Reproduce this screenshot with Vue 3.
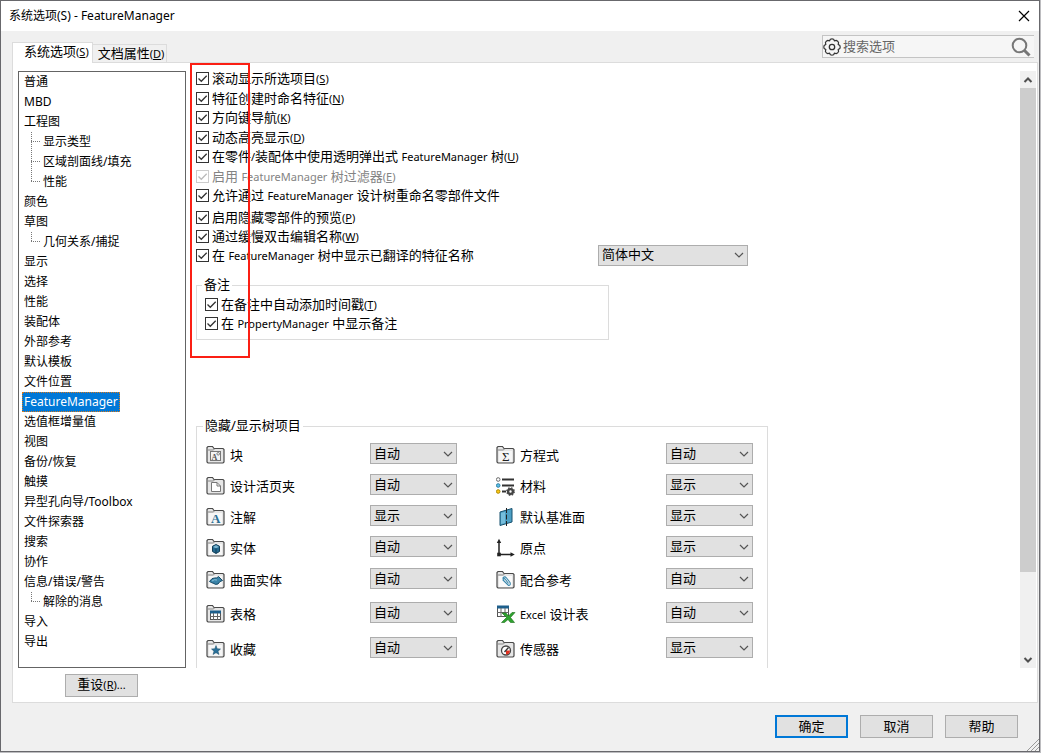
<template>
  <div class="window">
    <header class="titlebar">
      <h1>系统选项(S) - FeatureManager</h1>
      <button class="close" aria-label="关闭">
        <svg width="12" height="12" viewBox="0 0 12 12">
          <path d="M1 1L11 11M11 1L1 11" stroke="#000" stroke-width="1.2" />
        </svg>
      </button>
    </header>

    <div class="tabbar">
      <div class="tabs" role="tablist">
        <button
          v-for="tab in tabs"
          :key="tab"
          role="tab"
          :class="['tab', { active: tab === activeTab }]"
          :aria-selected="tab === activeTab"
          @click="activeTab = tab"
        >
          <span v-for="(p, i) in split(tab)" :key="i" :class="p.type">{{ p.text }}</span>
        </button>
      </div>
      <div class="search">
        <svg width="18" height="18" viewBox="0 0 18 18" fill="none" stroke="#333">
          <path
            stroke-width="1.2"
            d="M7.4 1.2Q9 .4 10.6 1.2L11.4 2.8L13.2 2.3Q15 2.8 15.6 4.6L15.2 6.4L16.8 7.4Q17.5 9 16.8 10.6L15.2 11.6L15.6 13.4Q15 15.2 13.2 15.7L11.4 15.2L10.6 16.8Q9 17.6 7.4 16.8L6.6 15.2L4.8 15.7Q3 15.2 2.4 13.4L2.8 11.6L1.2 10.6Q.5 9 1.2 7.4L2.8 6.4L2.4 4.6Q3 2.8 4.8 2.3L6.6 2.8Z"
          />
          <circle cx="9" cy="9" r="2.7" stroke-width="1.3" />
        </svg>
        <input v-model="keyword" type="text" placeholder="搜索选项" aria-label="搜索选项" />
        <button class="search-btn" aria-label="搜索">
          <svg width="20" height="20" viewBox="0 0 20 20" fill="none" stroke="#777">
            <circle cx="8.5" cy="8.5" r="6.8" stroke-width="2" />
            <path d="M13.5 13.5L18.5 18.5" stroke-width="3" />
          </svg>
        </button>
      </div>
    </div>

    <section class="panel">
      <div class="main">
        <ul class="tree">
          <li v-for="item in treeItems" :key="item.id">
            <svg v-if="item.child" class="branch" width="12" height="20" viewBox="0 0 12 20">
              <path
                :d="item.last ? 'M.5 0V10' : 'M.5 0V20'"
                stroke="#777"
                stroke-dasharray="1 1"
              />
              <path d="M0 9.5H10" stroke="#777" stroke-dasharray="1 1" />
            </svg>
            <button
              :class="['node', { selected: item.id === selected }]"
              @click="selected = item.id"
            >
              {{ item.name }}
            </button>
          </li>
        </ul>

        <div class="content">
          <div class="options">
            <label v-for="opt in options" :key="opt.label" :class="['check', { disabled: opt.disabled }]">
              <input v-model="opt.checked" type="checkbox" :disabled="opt.disabled" />
              <span class="text">
                <span v-for="(p, i) in split(opt.label)" :key="i" :class="p.type">{{ p.text }}</span>
              </span>
            </label>
          </div>

          <div class="options-more">
            <div v-for="opt in moreOptions" :key="opt.label" class="option-row">
              <label class="check">
                <input v-model="opt.checked" type="checkbox" />
                <span class="text">
                  <span v-for="(p, i) in split(opt.label)" :key="i" :class="p.type">{{ p.text }}</span>
                </span>
              </label>
              <select v-if="opt.language" v-model="language" aria-label="特征名称语言">
                <option>简体中文</option>
                <option>English</option>
              </select>
            </div>
          </div>

          <fieldset class="notes">
            <legend>备注</legend>
            <label v-for="opt in noteOptions" :key="opt.label" class="check">
              <input v-model="opt.checked" type="checkbox" />
              <span class="text">
                <span v-for="(p, i) in split(opt.label)" :key="i" :class="p.type">{{ p.text }}</span>
              </span>
            </label>
          </fieldset>

          <fieldset class="visibility">
            <legend>隐藏/显示树项目</legend>
            <div class="visibility-grid">
              <template v-for="entry in entries" :key="entry.id">
                <label class="entry" :for="entry.id">
                  <svg width="20" height="20" viewBox="0 0 20 20">
                    <g v-if="entry.folder">
                      <path
                        d="M1 17V2.5L2 1.5H6.5L8 3.5H17L18 4.5V17L17 18H2Z"
                        fill="#e6e6e6"
                        stroke="#4a4a4a"
                        stroke-width="1.2"
                      />
                      <path d="M1.5 5H7.5L8.5 3.8" fill="none" stroke="#888" />
                    </g>
                    <g v-html="glyphs[entry.icon]"></g>
                  </svg>
                  <span class="text">
                    <span v-for="(p, i) in split(entry.name)" :key="i" :class="p.type">{{ p.text }}</span>
                  </span>
                </label>
                <select :id="entry.id" v-model="entry.value">
                  <option>自动</option>
                  <option>隐藏</option>
                  <option>显示</option>
                </select>
              </template>
            </div>
          </fieldset>
        </div>

        <div class="scrollbar">
          <button aria-label="向上滚动">
            <svg width="10" height="8" viewBox="0 0 10 8" fill="none">
              <path d="M1.5 6L5 2.5L8.5 6" stroke="#505050" stroke-width="2" />
            </svg>
          </button>
          <div class="track"><div class="thumb"></div></div>
          <button aria-label="向下滚动">
            <svg width="10" height="8" viewBox="0 0 10 8" fill="none">
              <path d="M1.5 2L5 5.5L8.5 2" stroke="#505050" stroke-width="2" />
            </svg>
          </button>
        </div>

        <div class="highlight"></div>
      </div>

      <div class="reset-row">
        <button class="btn">
          <span v-for="(p, i) in split('重设(R)...')" :key="i" :class="p.type">{{ p.text }}</span>
        </button>
      </div>
    </section>

    <footer class="footer">
      <button class="btn primary">确定</button>
      <button class="btn">取消</button>
      <button class="btn">帮助</button>
    </footer>

    <svg class="grip" width="12" height="12" viewBox="0 0 12 12">
      <path d="M0 12L12 0M4 12L12 4M8 12L12 8" stroke="#999" />
    </svg>
  </div>
</template>

<script setup>
import { ref } from 'vue'

const tabs = ['系统选项(S)', '文档属性(D)']
const activeTab = ref(tabs[0])
const keyword = ref('')
const language = ref('简体中文')

const tree = [
  { name: '普通' },
  { name: 'MBD' },
  { name: '工程图', children: ['显示类型', '区域剖面线/填充', '性能'] },
  { name: '颜色' },
  { name: '草图', children: ['几何关系/捕捉'] },
  { name: '显示' },
  { name: '选择' },
  { name: '性能' },
  { name: '装配体' },
  { name: '外部参考' },
  { name: '默认模板' },
  { name: '文件位置' },
  { name: 'FeatureManager' },
  { name: '选值框增量值' },
  { name: '视图' },
  { name: '备份/恢复' },
  { name: '触摸' },
  { name: '异型孔向导/Toolbox' },
  { name: '文件探索器' },
  { name: '搜索' },
  { name: '协作' },
  { name: '信息/错误/警告', children: ['解除的消息'] },
  { name: '导入' },
  { name: '导出' },
]

const treeItems = tree.flatMap((item) => {
  const children = item.children || []
  return [
    { id: item.name, name: item.name },
    ...children.map((name, i) => ({
      id: item.name + '/' + name,
      name,
      child: true,
      last: i === children.length - 1,
    })),
  ]
})
const selected = ref('FeatureManager')

const options = ref([
  { label: '滚动显示所选项目(S)', checked: true },
  { label: '特征创建时命名特征(N)', checked: true },
  { label: '方向键导航(K)', checked: true },
  { label: '动态高亮显示(D)', checked: true },
  { label: '在零件/装配体中使用透明弹出式 FeatureManager 树(U)', checked: true },
  { label: '启用 FeatureManager 树过滤器(E)', checked: true, disabled: true },
  { label: '允许通过 FeatureManager 设计树重命名零部件文件', checked: true },
])

const moreOptions = ref([
  { label: '启用隐藏零部件的预览(P)', checked: true },
  { label: '通过缓慢双击编辑名称(W)', checked: true },
  { label: '在 FeatureManager 树中显示已翻译的特征名称', checked: true, language: true },
])

const noteOptions = ref([
  { label: '在备注中自动添加时间戳(T)', checked: true },
  { label: '在 PropertyManager 中显示备注', checked: true },
])

const entries = ref([
  { id: 'block', name: '块', icon: 'block', folder: true, value: '自动' },
  { id: 'equation', name: '方程式', icon: 'sigma', folder: true, value: '自动' },
  { id: 'binder', name: '设计活页夹', icon: 'page', folder: true, value: '自动' },
  { id: 'material', name: '材料', icon: 'material', value: '显示' },
  { id: 'annotation', name: '注解', icon: 'letter', folder: true, value: '显示' },
  { id: 'plane', name: '默认基准面', icon: 'plane', value: '显示' },
  { id: 'solid', name: '实体', icon: 'cube', folder: true, value: '自动' },
  { id: 'origin', name: '原点', icon: 'origin', value: '显示' },
  { id: 'surface', name: '曲面实体', icon: 'surface', folder: true, value: '自动' },
  { id: 'mate', name: '配合参考', icon: 'clip', folder: true, value: '自动' },
  { id: 'tables', name: '表格', icon: 'table', folder: true, value: '自动' },
  { id: 'excel', name: 'Excel 设计表', icon: 'excel', value: '自动' },
  { id: 'favorite', name: '收藏', icon: 'star', folder: true, value: '自动' },
  { id: 'sensor', name: '传感器', icon: 'gauge', folder: true, value: '显示' },
])

const glyphs = {
  block:
    '<rect x="4.5" y="6.5" width="10" height="9" fill="#f4f4f4" stroke="#777"/><text x="5.5" y="14.5" font-family="Liberation Serif" font-weight="bold" font-size="8" fill="#555">A</text><circle cx="12.2" cy="8.8" r="1.3" fill="none" stroke="#666" stroke-width=".8"/>',
  sigma:
    '<rect x="3" y="6" width="13" height="11" fill="#f6f6f6"/><text x="6" y="16" font-family="Liberation Serif" font-size="13" fill="#222">Σ</text>',
  page: '<path d="M5.5 6.5H11L14.5 10V15.5H5.5Z" fill="#fff" stroke="#777"/><path d="M11 6.5V10H14.5" fill="none" stroke="#777"/>',
  letter:
    '<rect x="3" y="6" width="13" height="11" fill="#f6f6f6"/><text x="5" y="16" font-family="Liberation Serif" font-weight="bold" font-size="13" fill="#2b6f95">A</text>',
  cube: '<rect x="3" y="6" width="13" height="11" fill="#f6f6f6"/><path d="M10 6.5L13.5 8.2V13.5L10 15.5L6.5 13.5V8.2Z" fill="#246a90" stroke="#123f58"/><path d="M7 9L10 10.2L13 9L10 7.2Z" fill="#7fb9d4"/><path d="M10 10.5V15" stroke="#123f58"/>',
  surface:
    '<rect x="3" y="6" width="13" height="11" fill="#f6f6f6"/><path d="M3.5 11.5Q6 7.5 8.5 8Q11 8.5 12.5 6.5L16.5 10.5Q13.5 11 12 14Q9 15 8 13.5Q6 13 3.5 11.5Z" fill="#3a83a8" stroke="#174a66"/><path d="M6 11Q8 9 11 10" fill="none" stroke="#8cc4dc"/>',
  table:
    '<rect x="4.5" y="7.5" width="10" height="8" fill="#fff" stroke="#555"/><rect x="4" y="6.5" width="11" height="3" fill="#1d5f8c"/><path d="M4 12.5H15M7.5 9V16M11.5 9V16" stroke="#666"/>',
  star: '<rect x="3" y="6" width="13" height="11" fill="#f6f6f6"/><path d="M10 6.5L11.2 9.7L14.5 10L12 12.2L13 15.5L10 13.7L7 15.5L8 12.2L5.5 10L8.8 9.7Z" fill="#2a7099" stroke="#174a66" stroke-width=".5"/>',
  material:
    '<path d="M6 3.5H18M6 9.5H18M6 15.5H10" stroke="#333" stroke-width="2"/><circle cx="2.2" cy="3.5" r="1.8" fill="#fff" stroke="#666"/><circle cx="2.2" cy="9.5" r="1.8" fill="#5ac0e8" stroke="#2b7ea3"/><circle cx="2.2" cy="15.5" r="1.8" fill="#ffc815" stroke="#a80"/><circle cx="14.5" cy="15.5" r="2.4" fill="none" stroke="#444" stroke-width="2.4"/><circle cx="14.5" cy="15.5" r="3.8" fill="none" stroke="#444" stroke-width="1.2" stroke-dasharray="1.5 1.5"/>',
  plane:
    '<path d="M4 5L16 1.5V15L4 18.5Z" fill="#4d9fc4" stroke="#16506e"/><path d="M5 6L9 5V16L5 17Z" fill="#76bddb"/><path d="M10.5 1V19" stroke="#222" stroke-dasharray="5 1.5"/>',
  origin:
    '<path d="M3 17V4M3 16.5H15" fill="none" stroke="#222" stroke-width="1.5"/><path d="M.8 5L3 .8L5.200 5ZM14.5 14.300L18.8 16.5L14.5 18.7Z" fill="#222"/><rect x="1.2" y="14.7" width="3.6" height="3.6" fill="#222"/>',
  clip: '<rect x="3" y="6" width="13" height="11" fill="#fafafa"/><path d="M6.500 8.5Q8.5 5.5 10.5 8L14 12.5Q15 15.500 12.5 15.5L7 10Q8 7.5 9.5 9.5L12.5 13.5" fill="none" stroke="#3a87ac" stroke-width="1.1"/>',
  excel:
    '<rect x="1.5" y="2.5" width="11" height="10" fill="#fff" stroke="#555"/><rect x="1" y="1.5" width="12" height="3" fill="#1d5f8c"/><path d="M1 8.5H13M5 4V13M9 4V13" stroke="#666"/><path d="M6 9H10L12.5 12L16 8.5H19L14.5 13.5L18.5 18.5H14.5L12 15.5L8.5 18.5H5.5L10.5 13.5Z" fill="#2fa32f" stroke="#176b17" stroke-width=".6"/>',
  gauge:
    '<circle cx="10" cy="11.5" r="4.500" fill="#fff" stroke="#444" stroke-width="1.3"/><path d="M10 11.5L14 11.5A4 4 0 0 1 10 15.5Z" fill="#e0301e"/><path d="M8.5 13L12.5 8.5" stroke="#333" stroke-width="1.3"/>',
}

// Breaks a caption into CJK runs, latin runs and the underlined access key
const split = (label) => {
  const parts = []
  for (const run of label.match(/[\x21-\x7e]+|[^\x21-\x7e]+/g)) {
    const key = run.match(/^\((\w)\)(.*)$/)
    if (key) {
      parts.push({ type: 'latin', text: '(' })
      parts.push({ type: 'latin key', text: key[1] })
      parts.push({ type: 'latin', text: ')' + key[2] })
    } else {
      parts.push({ type: /^[\x21-\x7e]/.test(run) ? 'latin' : 'cjk', text: run })
    }
  }
  return parts
}
</script>

<style>
body {
  background: #bdbdc0;
}
</style>

<style scoped>
.window {
  position: relative;
  display: flex;
  flex-direction: column;
  box-sizing: border-box;
  height: calc(100vh - 1px);
  margin-right: 1px;
  border: 1px solid #68686c;
  background: #f0f0f0;
  color: #000;
  font-family: "Noto Sans", "Noto Sans CJK SC", sans-serif;
  font-size: 13px;
  line-height: 14px;
}

button,
input,
select {
  margin: 0;
  font: inherit;
  color: inherit;
}

.latin {
  font-size: 11px;
}

.key {
  text-decoration: underline;
}

.titlebar {
  display: flex;
  align-items: center;
  justify-content: space-between;
  flex: none;
  height: 30px;
  padding: 0 9px 0 8px;
  background: #fff;
}

.titlebar h1 {
  margin: 0;
  font-size: 12px;
  font-weight: normal;
}

.close {
  display: flex;
  padding: 0;
  border: none;
  background: none;
}

.tabbar {
  display: flex;
  justify-content: space-between;
  flex: none;
  height: 31px;
  padding: 0 5px 0 11px;
}

.tabs {
  display: flex;
  align-items: flex-end;
}

.tab {
  height: 18px;
  padding: 0 2px 0 5px;
  border: 1px solid #dcdcdc;
  border-left: none;
  border-bottom: none;
  background: #f0f0f0;
  white-space: nowrap;
}

.tab.active {
  position: relative;
  z-index: 1;
  height: 21px;
  margin-bottom: -1px;
  padding: 0 3px 4px 11px;
  border-left: 1px solid #dcdcdc;
  background: #fff;
}

.search {
  display: flex;
  align-items: center;
  box-sizing: border-box;
  width: 212px;
  height: 23px;
  margin-top: 4px;
  padding: 0 3px 0 0;
  border: 1px solid #c4c4c4;
  border-right: none;
  background: #f6f6f6;
}

.search input {
  flex: 1;
  min-width: 0;
  padding: 0 2px 2px;
  border: none;
  outline: none;
  background: none;
}

.search input::placeholder {
  color: #666;
}

.search-btn {
  display: flex;
  padding: 0;
  border: none;
  background: none;
}

.panel {
  display: flex;
  flex-direction: column;
  flex: 1;
  min-height: 0;
  margin: 0 1px 0 11px;
  border: 1px solid #dcdcdc;
  background: #fff;
}

.main {
  position: relative;
  display: flex;
  flex: 1;
  min-height: 0;
  padding: 0 1px 0 5px;
}

.tree {
  box-sizing: border-box;
  width: 168px;
  margin: 8px 0 0;
  padding: 0 3px;
  border: 1px solid #646464;
  list-style: none;
  font-size: 12px;
}

.tree li {
  display: flex;
  height: 20px;
}

.branch {
  flex: none;
  margin: 0 -2px 0 9px;
}

.node {
  padding: 0 1px;
  border: 1px solid transparent;
  background: none;
  white-space: nowrap;
}

.node.selected {
  border: 1px dotted #d97a1c;
  background: #0078d7;
  color: #fff;
}

.content {
  flex: 1;
  min-width: 0;
  overflow: hidden;
  padding: 8px 0 0 10px;
}

.check {
  display: flex;
  align-items: center;
  gap: 3px;
  height: 14px;
  white-space: nowrap;
}

.check input {
  appearance: none;
  flex: none;
  width: 13px;
  height: 13px;
  border: 1px solid #333;
  background: #fff;
}

.check input:checked {
  background: #fff url("data:image/svg+xml,%3Csvg xmlns='http://www.w3.org/2000/svg' viewBox='0 0 11 11'%3E%3Cpath d='M1.5 5.5L4.3 8.3L9.7 2.7' fill='none' stroke='%23333' stroke-width='1.3'/%3E%3C/svg%3E");
}

.check.disabled {
  color: #838383;
}

.check.disabled input {
  border-color: #ccc;
  background-image: url("data:image/svg+xml,%3Csvg xmlns='http://www.w3.org/2000/svg' viewBox='0 0 11 11'%3E%3Cpath d='M1.5 5.5L4.3 8.3L9.7 2.7' fill='none' stroke='%23bbb' stroke-width='1.3'/%3E%3C/svg%3E");
}

.text {
  white-space: pre;
}

.options .check {
  margin-bottom: 5px;
}

.options .check:nth-child(odd) {
  margin-bottom: 6px;
}

.options-more {
  display: grid;
  gap: 5px;
  margin-top: 8px;
}

.option-row {
  display: grid;
  grid-template-columns: 402px 150px;
  grid-template-rows: 14px;
  align-items: center;
}

select {
  appearance: none;
  box-sizing: border-box;
  width: 100%;
  height: 21px;
  padding: 0 18px 2px 3px;
  border: 1px solid #adadad;
  border-radius: 0;
  background: #e1e1e1 url("data:image/svg+xml,%3Csvg xmlns='http://www.w3.org/2000/svg' width='10' height='6'%3E%3Cpath d='M1 1L5 5L9 1' fill='none' stroke='%23555' stroke-width='1.2'/%3E%3C/svg%3E") no-repeat right 3px center;
}

fieldset {
  box-sizing: border-box;
  min-width: 0;
  margin: 0;
  border: 1px solid #dcdcdc;
}

legend {
  height: 16px;
  padding: 0 2px;
  margin-left: -3px;
  line-height: 14px;
}

.notes {
  max-width: 413px;
  margin-top: 15px;
  padding: 4px 8px 9px;
}

.notes .check + .check {
  margin-top: 5px;
}

.visibility {
  max-width: 572px;
  margin-top: 78px;
  padding: 9px 9px 40px;
}

.visibility-grid {
  display: grid;
  grid-template-columns: 164px 126px 170px 87px;
  grid-template-rows: 31px 31px 31px 32px 34px 35px 21px;
}

.visibility-grid select {
  width: 87px;
}

.entry {
  display: flex;
  align-items: center;
  gap: 4px;
  height: 24px;
}

@media (max-width: 820px) {
  .visibility-grid {
    grid-template-columns: 164px 87px;
    grid-template-rows: none;
    grid-auto-rows: 31px;
  }
}

.scrollbar {
  display: flex;
  flex-direction: column;
  flex: none;
  width: 16px;
  margin-top: 8px;
  background: #f0f0f0;
}

.scrollbar button {
  display: flex;
  align-items: center;
  justify-content: center;
  height: 17px;
  padding: 0;
  border: none;
  background: none;
}

.track {
  flex: 1;
}

.thumb {
  height: 86%;
  background: #cdcdcd;
}

.highlight {
  position: absolute;
  top: 0;
  left: 177px;
  width: 56px;
  height: 291px;
  border: 2px solid #fb1f14;
  pointer-events: none;
}

.reset-row {
  display: flex;
  flex: none;
  padding: 6px 0 5px 52px;
}

.btn {
  width: 73px;
  height: 23px;
  padding: 0 0 2px;
  border: 1px solid #adadad;
  background: #e1e1e1;
}

.btn.primary {
  border: 2px solid #0078d7;
}

.footer {
  display: flex;
  justify-content: flex-end;
  gap: 12px;
  flex: none;
  padding: 12px 21px 13px;
}

.grip {
  position: absolute;
  right: 0;
  bottom: 0;
}
</style>
